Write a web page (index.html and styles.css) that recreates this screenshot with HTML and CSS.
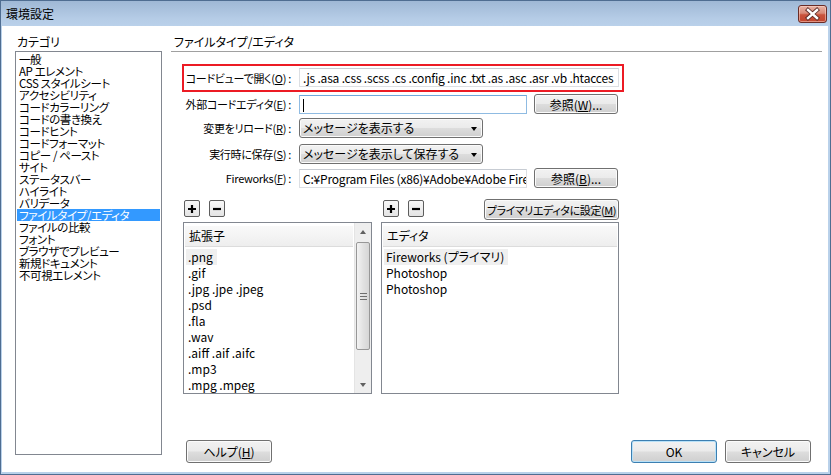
FILE: index.html
```html
<!DOCTYPE html>
<html lang="ja">
<head>
<meta charset="utf-8">
<title>環境設定</title>
<link rel="stylesheet" href="styles.css">
</head>
<body>
<div class="window">
  <div class="titlebar">
    <span class="title">環境設定</span>
    <button class="close" aria-label="閉じる">
      <svg width="29" height="18" viewBox="0 0 29 18">
        <path d="M10 5 L19 13 M19 5 L10 13" stroke="#5a2a26" stroke-width="4.2" stroke-linecap="square"/>
        <path d="M10 5 L19 13 M19 5 L10 13" stroke="#ffffff" stroke-width="2.4" stroke-linecap="square"/>
      </svg>
    </button>
  </div>
  <div class="client">
    <div class="sidebar">
      <div class="caption">カテゴリ</div>
      <ul class="catlist">
        <li>一般</li>
        <li>AP エレメント</li>
        <li>CSS スタイルシート</li>
        <li>アクセシビリティ</li>
        <li>コードカラーリング</li>
        <li>コードの書き換え</li>
        <li>コードヒント</li>
        <li>コードフォーマット</li>
        <li>コピー / ペースト</li>
        <li>サイト</li>
        <li>ステータスバー</li>
        <li>ハイライト</li>
        <li>バリデータ</li>
        <li class="selected">ファイルタイプ/エディタ</li>
        <li>ファイルの比較</li>
        <li>フォント</li>
        <li>ブラウザでプレビュー</li>
        <li>新規ドキュメント</li>
        <li>不可視エレメント</li>
      </ul>
    </div>
    <div class="main">
      <div class="section-head">ファイルタイプ/エディタ</div>
      <div class="form">
        <div class="row emphasis">
          <span class="lbl">コードビューで開く(<u>O</u>) :</span>
          <div class="field full">.js .asa .css .scss .cs .config .inc .txt .as .asc .asr .vb .htacces</div>
        </div>
        <div class="row r2">
          <span class="lbl">外部コードエディタ(<u>E</u>) :</span>
          <div class="field mid focus"><span class="caret"></span></div>
          <button class="btn browse">参照(<u>W</u>)...</button>
        </div>
        <div class="row r3">
          <span class="lbl">変更をリロード(<u>R</u>) :</span>
          <div class="select">メッセージを表示する<span class="arrow"></span></div>
        </div>
        <div class="row r4">
          <span class="lbl">実行時に保存(<u>S</u>) :</span>
          <div class="select">メッセージを表示して保存する<span class="arrow"></span></div>
        </div>
        <div class="row r5">
          <span class="lbl">Fireworks(<u>F</u>) :</span>
          <div class="field mid">C:¥Program Files (x86)¥Adobe¥Adobe Firew</div>
          <button class="btn browse">参照(<u>B</u>)...</button>
        </div>
      </div>

      <div class="panels">
        <div class="panel ext">
          <div class="tools">
            <button class="mini" aria-label="追加"><svg width="10" height="10" viewBox="0 0 10 10"><path d="M5 1V9M1 5H9" stroke="#000" stroke-width="2.2"/></svg></button>
            <button class="mini" aria-label="削除"><svg width="10" height="10" viewBox="0 0 10 10"><path d="M1 5H9" stroke="#000" stroke-width="2.2"/></svg></button>
          </div>
          <div class="list">
            <div class="list-body">
              <div class="list-head">拡張子</div>
              <ul class="items">
                <li class="current">.png</li>
                <li>.gif</li>
                <li>.jpg .jpe .jpeg</li>
                <li>.psd</li>
                <li>.fla</li>
                <li>.wav</li>
                <li>.aiff .aif .aifc</li>
                <li>.mp3</li>
                <li>.mpg .mpeg</li>
              </ul>
            </div>
            <div class="scrollbar">
              <div class="sb-arrow up"><span></span></div>
              <div class="sb-track">
                <div class="sb-thumb"><span class="grip"></span></div>
              </div>
              <div class="sb-arrow down"><span></span></div>
            </div>
          </div>
        </div>
        <div class="panel editors">
          <div class="tools">
            <button class="mini" aria-label="追加"><svg width="10" height="10" viewBox="0 0 10 10"><path d="M5 1V9M1 5H9" stroke="#000" stroke-width="2.2"/></svg></button>
            <button class="mini" aria-label="削除"><svg width="10" height="10" viewBox="0 0 10 10"><path d="M1 5H9" stroke="#000" stroke-width="2.2"/></svg></button>
            <button class="btn primary">プライマリエディタに設定(<u>M</u>)</button>
          </div>
          <div class="list">
            <div class="list-body">
              <div class="list-head">エディタ</div>
              <ul class="items">
                <li class="current">Fireworks (プライマリ)</li>
                <li>Photoshop</li>
                <li>Photoshop</li>
              </ul>
            </div>
          </div>
        </div>
      </div>

      <div class="footer">
        <button class="btn dlg help">ヘルプ(<u>H</u>)</button>
        <button class="btn dlg ok">OK</button>
        <button class="btn dlg">キャンセル</button>
      </div>
    </div>
  </div>
</div>
</body>
</html>
```
FILE: styles.css
```css
* { box-sizing: border-box; }

html, body {
  margin: 0;
  padding: 0;
  width: 831px;
  height: 475px;
  overflow: hidden;
  background: #ffffff;
}

body {
  font-family: "Noto Sans CJK JP", "Noto Sans", sans-serif;
  font-size: 12px;
  font-feature-settings: "palt";
  color: #000;
}

button {
  font: inherit;
  color: inherit;
  padding: 0;
  margin: 0;
}

ul {
  list-style: none;
  margin: 0;
  padding: 0;
}

u { text-decoration: underline; text-underline-offset: 1px; }

.window {
  width: 831px;
  height: 475px;
  border: 1px solid #4f6d91;
  background: #b9d1ea;
  display: flex;
  flex-direction: column;
}

.titlebar {
  height: 25px;
  flex: none;
  display: flex;
  align-items: flex-start;
  background: linear-gradient(#9fb8d5, #b5cce6 70%, #bad1ea);
}

.title {
  line-height: 25px;
  padding-left: 5px;
  color: #000;
}

.close {
  margin-left: auto;
  margin-right: 3px;
  margin-top: 4px;
  width: 29px;
  height: 18px;
  border: 1px solid #6a2c26;
  border-radius: 3px;
  background: linear-gradient(#e8b2a4 0%, #d98a77 45%, #c9533c 55%, #c2452d 100%);
  box-shadow: inset 0 0 0 1px rgba(255, 220, 210, 0.5);
  display: flex;
  align-items: center;
  justify-content: center;
}

.close svg { display: block; margin: -1px; }

.client {
  flex: 1;
  margin: 0 2px 2px 1px;
  background: #ffffff;
  display: flex;
  padding: 9px 0 0 13px;
  gap: 9px;
  min-height: 0;
}

/* ---- Sidebar ---- */
.sidebar {
  width: 147px;
  flex: none;
  display: flex;
  flex-direction: column;
  padding-bottom: 17px;
}

.caption {
  height: 16px;
  line-height: 14px;
  padding-left: 2px;
}

.catlist {
  flex: 1;
  border: 1px solid #828790;
  padding: 1px;
}

.catlist li {
  height: 12px;
  line-height: 12px;
  padding-left: 2px;
  white-space: nowrap;
  font-size: 11.5px;
  letter-spacing: -0.4px;
}

.catlist li.selected {
  background: #3399ff;
  color: #ffffff;
}

/* ---- Main ---- */
.main {
  flex: 1;
  display: flex;
  flex-direction: column;
  padding-right: 6px;
  padding-bottom: 9px;
  min-width: 0;
}

.section-head {
  height: 17px;
  line-height: 14px;
  padding-left: 3px;
  border-bottom: 1px solid #a0a0a0;
}

.form {
  margin: 12px 0 0 13px;
  display: flex;
  flex-direction: column;
}

.row {
  display: flex;
  align-items: center;
  height: 20px;
}

.row .lbl {
  width: 107px;
  flex: none;
  text-align: right;
  white-space: nowrap;
  margin-right: 8px;
  font-size: 11px;
  letter-spacing: -0.3px;
}

.row.emphasis {
  height: 28px;
  width: 442px;
  margin-left: -2px;
  border: 2px solid #ec1b24;
  padding: 2px 3px 3px 0;
}

.row.r2 { margin-top: 2px; }
.row.r3 { margin-top: 4px; }
.row.r4 { margin-top: 6px; }
.row.r5 { margin-top: 4px; }

.field {
  height: 19px;
  border: 1px solid #dcdfe3;
  border-top-color: #c7ccd3;
  background: #ffffff;
  line-height: 17px;
  padding-left: 3px;
  white-space: nowrap;
  overflow: hidden;
  letter-spacing: -0.2px;
}

.field.full { width: 320px; }
.field.mid { width: 228px; }

.field.focus {
  border-color: #8fbbe2;
  border-top-color: #6fa8dc;
}

.caret {
  display: inline-block;
  width: 1px;
  height: 13px;
  background: #000;
  vertical-align: -2px;
}

.btn {
  border: 1px solid #707070;
  border-radius: 3px;
  background: linear-gradient(#f2f2f2 0%, #ebebeb 48%, #dddddd 52%, #cfcfcf 100%);
  box-shadow: inset 0 0 0 1px #fbfbfb;
  text-align: center;
  white-space: nowrap;
  line-height: 17px;
  cursor: default;
}

.btn.browse {
  width: 84px;
  height: 20px;
  margin-left: 7px;
}

.select {
  position: relative;
  width: 184px;
  height: 20px;
  border: 1px solid #707070;
  border-radius: 3px;
  background: linear-gradient(#f2f2f2 0%, #ebebeb 48%, #dddddd 52%, #cfcfcf 100%);
  box-shadow: inset 0 0 0 1px #fbfbfb;
  line-height: 18px;
  padding-left: 3px;
  white-space: nowrap;
}

.select .arrow {
  position: absolute;
  right: 5px;
  top: 8px;
  width: 0;
  height: 0;
  border-left: 3.5px solid transparent;
  border-right: 3.5px solid transparent;
  border-top: 4px solid #000;
}

/* ---- Panels ---- */
.panels {
  margin: 11px 0 0 12px;
  display: flex;
  gap: 9px;
}

.panel {
  display: flex;
  flex-direction: column;
}

.panel.ext { width: 189px; }
.panel.editors { width: 238px; }

.tools {
  height: 21px;
  display: flex;
  align-items: flex-start;
  margin-bottom: 2px;
}

.ext .tools { padding-left: 1px; }
.editors .tools { padding-left: 2px; }

.mini {
  width: 16px;
  height: 17px;
  margin-top: 1px;
  margin-right: 9px;
  border: 1px solid #5d5d5d;
  border-radius: 2px;
  background: linear-gradient(#f8f8f8, #e4e4e4);
  display: flex;
  align-items: center;
  justify-content: center;
}

.mini svg { display: block; }

.btn.primary {
  margin-left: auto;
  width: 135px;
  height: 21px;
  padding: 0;
  line-height: 18px;
  font-size: 11px;
  letter-spacing: -0.4px;
}

.list {
  height: 172px;
  border: 1px solid #828790;
  display: flex;
  background: #ffffff;
}

.list-body {
  flex: 1;
  padding: 3px 1px 0 1px;
  min-width: 0;
}

.list-head {
  height: 21px;
  line-height: 20px;
  padding-left: 4px;
  background: linear-gradient(#f9f9f9, #eeeeee);
  border-bottom: 1px solid #dcdcdc;
}

.items {
  margin-top: 2px;
}

.items li {
  height: 16px;
  line-height: 16px;
  padding: 0 4px 0 2px;
  margin-left: 1px;
  white-space: nowrap;
  width: max-content;
}

.items li.current {
  background: #efefef;
}

.scrollbar {
  width: 17px;
  flex: none;
  display: flex;
  flex-direction: column;
  background: #eeeeee;
  border-left: 1px solid #e4e4e4;
}

.sb-arrow {
  height: 17px;
  display: flex;
  align-items: center;
  justify-content: center;
}

.sb-arrow span {
  width: 0;
  height: 0;
  border-left: 3.5px solid transparent;
  border-right: 3.5px solid transparent;
}

.sb-arrow.up span { border-bottom: 4px solid #606060; }
.sb-arrow.down span { border-top: 4px solid #606060; }

.sb-track {
  flex: 1;
  padding: 2px 0 0 0;
}

.sb-thumb {
  height: 108px;
  margin: 0 1px;
  border: 1px solid #979797;
  border-radius: 2px;
  background: linear-gradient(90deg, #f3f3f3, #e2e2e2 50%, #d6d6d6);
  display: flex;
  align-items: center;
  justify-content: center;
}

.grip {
  width: 7px;
  height: 7px;
  background: repeating-linear-gradient(#6f6f6f 0 1px, transparent 1px 3px);
}

/* ---- Footer ---- */
.footer {
  margin-top: auto;
  display: flex;
  align-items: center;
  padding-left: 15px;
  padding-right: 11px;
}

.btn.dlg {
  width: 86px;
  height: 23px;
  line-height: 20px;
}

.btn.ok {
  margin-left: auto;
  margin-right: 8px;
  border-color: #3c7fb1;
  box-shadow: inset 0 0 0 1px #b8e1f8;
}
```
